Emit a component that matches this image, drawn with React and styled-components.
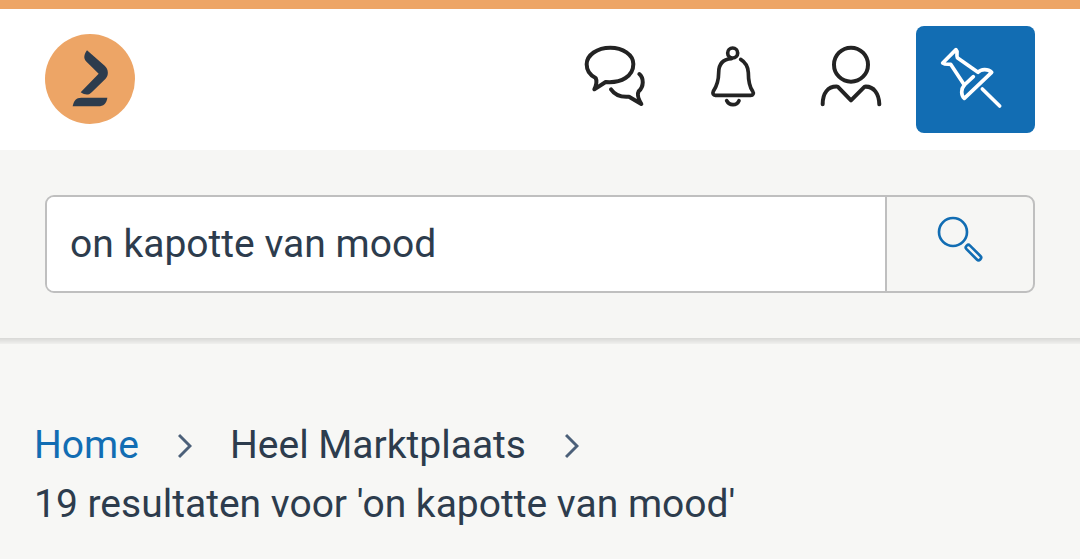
import React, { useState } from 'react';
import styled, { createGlobalStyle } from 'styled-components';

const colors = {
  orange: '#eda566',
  blue: '#126db3',
  text: '#2d3c4d',
  icon: '#232323',
  page: '#f7f7f5',
  border: '#bfbfbf',
};

const GlobalStyle = createGlobalStyle`
  * {
    box-sizing: border-box;
  }

  body {
    margin: 0;
    background: ${colors.page};
    color: ${colors.text};
    font-family: Roboto, sans-serif;
    font-size: 39px;
  }
`;

const Header = styled.header`
  display: flex;
  align-items: flex-start;
  justify-content: space-between;
  padding: 17px 45px;
  border-top: 9px solid ${colors.orange};
  background: #fff;
`;

const LogoLink = styled.a`
  display: flex;
  padding: 8px 0;

  svg {
    width: 90px;
    height: 90px;
  }
`;

const Nav = styled.nav`
  display: flex;
  gap: 7px;
`;

const NavGroup = styled.div`
  display: flex;
`;

const NavButton = styled.button`
  display: flex;
  align-items: center;
  justify-content: center;
  width: ${props => (props.$primary ? 119 : 118)}px;
  height: 107px;
  padding: 0;
  border: 0;
  border-radius: 8px;
  background: ${props => (props.$primary ? colors.blue : 'transparent')};
  color: ${props => (props.$primary ? '#fff' : colors.icon)};
  cursor: pointer;
`;

const Icon = styled.svg`
  width: ${props => props.$size}px;
  height: ${props => props.$size}px;
  fill: none;
  stroke: currentColor;
  stroke-linecap: round;
  stroke-linejoin: round;
`;

const SearchSection = styled.section`
  padding: 45px;
  background: #f6f6f4;
`;

const SearchForm = styled.form`
  display: flex;
  height: 98px;
  border: 2px solid ${colors.border};
  border-radius: 9px;
  overflow: hidden;
`;

const SearchInput = styled.input`
  flex: 1;
  min-width: 0;
  padding: 0 23px;
  border: 0;
  outline: 0;
  background: #fff;
  color: inherit;
  font: inherit;
`;

const SearchButton = styled.button`
  display: flex;
  align-items: center;
  justify-content: center;
  width: 148px;
  padding: 0;
  border: 0;
  border-left: 2px solid ${colors.border};
  background: transparent;
  color: ${colors.blue};
  cursor: pointer;
`;

const Shadow = styled.div`
  height: 6px;
  background: linear-gradient(#d8d8d6, #f0f0ee);
`;

const Breadcrumbs = styled.nav`
  padding: 72px 34px 20px;
  line-height: 59px;
`;

const CrumbList = styled.ol`
  display: flex;
  flex-wrap: wrap;
  margin: 0;
  padding: 0;
  list-style: none;
`;

const Crumb = styled.li`
  display: flex;
  align-items: center;
`;

const CrumbLink = styled.a`
  color: ${props => (props.$active ? colors.blue : 'inherit')};
  text-decoration: none;
`;

const Separator = styled.svg`
  width: 14px;
  height: 26px;
  margin: 0 38px 0 39px;
  fill: none;
  stroke: #4c6079;
  stroke-width: 3;
`;

const Results = styled.p`
  margin: 0;
`;

function Logo() {
  return (
    <svg viewBox="45 102 270 270" aria-hidden="true">
      <circle cx="180" cy="237" r="135" fill={colors.orange} />
      <g fill="#2d3c4d">
        <path d="M171 151 L224 197 C236 208 237 226 226 237 L186 276 C177 286 166 286 152 277 L206 221 L168 184 C160 175 162 163 171 151Z" />
        <path d="M154 293 H232 C230 310 220 319 205 319 H128 C131 302 138 293 154 293Z" />
      </g>
    </svg>
  );
}

function MessagesIcon() {
  return (
    <Icon $size={71} viewBox="27 42 213 213" strokeWidth="12" aria-hidden="true">
      <path d="M73 178 L107 156 C155 160 190 138 190 102 C190 74 158 53 121 53 C82 53 50 75 50 103 C50 122 62 137 77 144 C81 152 79 165 73 178Z" />
      <path d="M208 132 C222 144 222 170 206 184 C201 192 204 205 214 222 L177 200 C155 202 134 194 123 178" />
    </Icon>
  );
}

function BellIcon() {
  return (
    <Icon $size={71} viewBox="21 42 213 213" strokeWidth="11" aria-hidden="true">
      <circle cx="128" cy="69" r="15" />
      <path d="M124 86 C98 88 86 103 86 128 C86 158 77 173 70 184 C67 191 70 196 76 196 H182 C189 196 192 190 188 184 C180 172 175 155 175 128 C174 110 167 97 152 88" />
      <path d="M110 212 C118 228 140 228 147 212" />
    </Icon>
  );
}

function UserIcon() {
  return (
    <Icon $size={71} viewBox="30 42 213 213" strokeWidth="12" aria-hidden="true">
      <circle cx="138" cy="104" r="51" />
      <path d="M53 223 C53 190 68 168 98 170 L138 211 L179 170 C207 168 222 192 223 223" />
    </Icon>
  );
}

function PinIcon() {
  return (
    <Icon $size={71} viewBox="105 87 213 213" strokeWidth="11" aria-hidden="true">
      <path d="M153 104 L113 144 C120 149 128 147 137 148 L178 210 C168 222 167 240 178 250 L260 172 C248 160 228 162 219 172 L157 128 C153 120 160 110 153 104Z" />
      <path d="M178 210 L205 185" />
      <path d="M232 222 L284 273" />
    </Icon>
  );
}

function SearchIcon() {
  return (
    <Icon $size={58} viewBox="183 90 174 174" strokeWidth="8" aria-hidden="true">
      <circle cx="249" cy="141" r="42" />
      <rect x="281" y="195" width="58" height="15" rx="7" transform="rotate(45 310 203)" />
    </Icon>
  );
}

function Chevron() {
  return (
    <Separator viewBox="0 0 14 26" aria-hidden="true">
      <path d="M1 2 L12 13 L1 24" />
    </Separator>
  );
}

export default function App() {
  const [query, setQuery] = useState('on kapotte van mood');

  return (
    <>
      <GlobalStyle />
      <Header>
        <LogoLink href="#" aria-label="Marktplaats">
          <Logo />
        </LogoLink>
        <Nav>
          <NavGroup>
            <NavButton aria-label="Berichten"><MessagesIcon /></NavButton>
            <NavButton aria-label="Meldingen"><BellIcon /></NavButton>
            <NavButton aria-label="Account"><UserIcon /></NavButton>
          </NavGroup>
          <NavButton $primary aria-label="Plaats advertentie"><PinIcon /></NavButton>
        </Nav>
      </Header>
      <SearchSection>
        <SearchForm onSubmit={e => e.preventDefault()}>
          <SearchInput
            type="text"
            aria-label="Zoeken"
            value={query}
            onChange={e => setQuery(e.target.value)}
          />
          <SearchButton type="submit" aria-label="Zoek"><SearchIcon /></SearchButton>
        </SearchForm>
      </SearchSection>
      <Shadow />
      <Breadcrumbs aria-label="Kruimelpad">
        <CrumbList>
          <Crumb>
            <CrumbLink href="#" $active>Home</CrumbLink>
            <Chevron />
          </Crumb>
          <Crumb>
            <CrumbLink href="#">Heel Marktplaats</CrumbLink>
            <Chevron />
          </Crumb>
        </CrumbList>
        <Results>19 resultaten voor 'on kapotte van mood'</Results>
      </Breadcrumbs>
    </>
  );
}
